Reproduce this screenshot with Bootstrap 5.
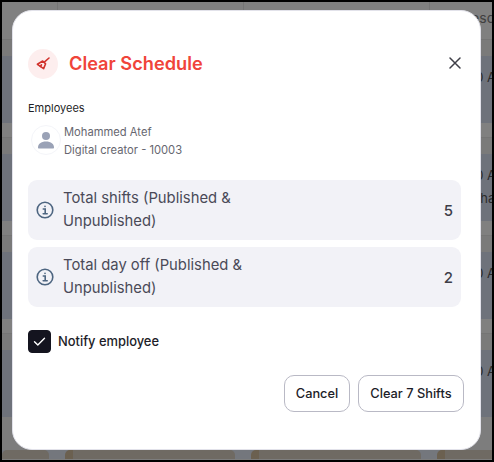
<!DOCTYPE html>
<html lang="en">
<head>
<meta charset="utf-8">
<title>Clear Schedule</title>
<link href="https://cdn.jsdelivr.net/npm/bootstrap@5.3.0/dist/css/bootstrap.min.css" rel="stylesheet">
<style>
html,body{height:100%;overflow:hidden}
body{font-family:Inter,"Liberation Sans",sans-serif;background:#000;padding:2px}
.sched{height:100%;overflow:hidden;background:#7d7d7d;font-size:13px;color:#2b2b2b;white-space:nowrap}
.sched-top{height:38px;background:#808080;border-bottom:1px solid #757575;padding:5px 0 0 431px;background-image:linear-gradient(#757575,#757575),linear-gradient(#757575,#757575),linear-gradient(#757575,#757575);background-size:1px 100%;background-repeat:no-repeat;background-position:55px 0,241px 0,427px 0;overflow:hidden;color:#3f3f3f;font-size:14px}
.sched-gap{height:16px;background:#7a7a7a}
.sched-band{height:67px;background:#6e727b;padding:11px 0 0 465px;overflow:hidden}
.sched-band p{margin:0;line-height:20px}
.sched-band .lo{margin-top:3px;padding-left:5px}
.sched-line{height:15px;background:#808080;border-bottom:1px solid #757575}
.sched-cards{height:9px;margin-top:33px;display:flex;background:#74777d}
.sched-cards i{display:block;width:16px;flex:none}
.sched-cards b{display:block;flex:none;height:100%;background:#6f6a63;border-left:8px solid #6b6050;border-radius:5px 5px 0 0}
.c0{width:47px;border-left:0!important}.c1{width:170px}.c2{width:170px}.c3{width:60px}
.modal.sheet{display:block;position:fixed;overflow:hidden}
.sheet .modal-dialog{width:469px;max-width:none;margin:10px 0 0 12px}
.sheet .modal-content{height:440px;border:1px solid #e2e2ea;border-radius:20px;background:#fff;padding:0 19px 0 15px}
.sheet .modal-header{border:0;padding:38px 0 0;height:68px}
.brand-dot{width:30px;height:30px;border-radius:50%;background:#fdeeee}
.sheet-title{font-size:18.2px;font-weight:600;color:#f0443a;margin:-2px 0 0 11px;line-height:30px}
.x-btn{background:none;border:0;padding:0;line-height:0;margin-top:-2px}
.sheet .modal-body{padding:0;flex:none}
.lbl{font-size:11px;color:#1f1f28;line-height:14px;margin-top:22px}
.person{margin:8px 0 0 3px;gap:3px;height:34px}
.ava{width:30px;height:30px;border-radius:50%;border:1px solid #f4f5f9;margin-top:2px}
.pname{font-size:11.2px;line-height:18px;color:#66666f}
.stat{background:#f2f2f7;border-radius:9px;height:60px;padding:0 8px;gap:9px;margin-bottom:7px;color:#4a4a58;font-size:14.8px;line-height:23px}
.stat-txt{width:190px}
.stats{margin-top:23px}
.stat-val{font-size:15px;font-weight:500;color:#3e3e48;margin-left:auto}
.notify{margin:23px 0 0;padding:0;min-height:0;display:flex;align-items:center;gap:7px}
.notify .form-check-input{width:23px;height:23px;margin:0;float:none;border-radius:4px;background-color:#14141f;border-color:#14141f}
.notify .form-check-input:checked[type=checkbox]{background-size:23px;background-image:url("data:image/svg+xml,%3csvg xmlns='http://www.w3.org/2000/svg' viewBox='0 0 23 23'%3e%3cpath fill='none' stroke='%23fff' stroke-width='1.4' stroke-linecap='round' stroke-linejoin='round' d='M6.500 11.800l3.300 3.300 6.700-6.800'/%3e%3c/svg%3e")}
.notify .form-check-label{font-size:12.9px;font-weight:500;color:#1d1d28;opacity:1}
.sheet .modal-footer{border:0;padding:0;margin:22px -3px 0 0;gap:8px;justify-content:flex-end}
.sheet .modal-footer .btn{margin:0;height:37px;border:1px solid #b9b9c5;border-radius:10px;background:#fff;color:#1d1d28;font-size:12.8px;font-weight:500;padding:0;line-height:35px}
.btn-cancel{width:66px}
.btn-clear{width:106px}
</style>
</head>
<body>
<div class="sched" aria-hidden="true">
  <div class="sched-top">Wednesday</div>
  <div class="sched-gap"></div>
  <div class="sched-band"><p>00 AM</p></div>
  <div class="sched-line"></div>
  <div class="sched-gap"></div>
  <div class="sched-band"><p>00 AM</p><p class="lo">Shad</p></div>
  <div class="sched-line"></div>
  <div class="sched-gap"></div>
  <div class="sched-band"><p>00 AM</p></div>
  <div class="sched-line"></div>
  <div class="sched-gap"></div>
  <div class="sched-band"><p>00 AM</p></div>
  <div class="sched-cards"><b class="c0"></b><i></i><b class="c1"></b><i></i><b class="c2"></b><i></i><b class="c3"></b></div>
</div>

<div class="modal sheet" role="dialog" aria-modal="true">
  <div class="modal-dialog">
    <div class="modal-content">
      <div class="modal-header d-flex align-items-center">
        <div class="brand-dot d-flex align-items-center justify-content-center">
          <svg width="18" height="18" viewBox="0 0 18 18" fill="none" stroke="#d1322c" stroke-width="1.6" stroke-linejoin="round" stroke-linecap="round"><path d="M15 3 10.300 7.200"/><path d="M8.700 6 11.600 8.800 9.600 13.600 3.400 9.300Z"/><path d="M6.400 11.500 7.500 9.800"/></svg>
        </div>
        <h5 class="sheet-title">Clear Schedule</h5>
        <button class="x-btn ms-auto" type="button" aria-label="Close">
          <svg width="12" height="12" viewBox="0 0 12 12" fill="none" stroke="#3f3f48" stroke-width="1.5" stroke-linecap="round"><path d="M1 1 11 11M11 1 1 11"/></svg>
        </button>
      </div>
      <div class="modal-body">
        <div class="lbl">Employees</div>
        <div class="person d-flex">
          <div class="ava d-flex align-items-center justify-content-center flex-shrink-0">
            <svg width="16" height="18" viewBox="0 0 16 18" fill="#9aa2b6"><circle cx="8" cy="5" r="4"/><path d="M1 17.500c-.6 0-1-.4-1-1C0 13 3 10.500 8 10.500s8 2.500 8 6c0 .6-.4 1-1 1Z"/></svg>
          </div>
          <div>
            <div class="pname">Mohammed Atef</div>
            <div class="pname">Digital creator - 10003</div>
          </div>
        </div>
        <div class="stats">
          <div class="stat d-flex align-items-center">
            <svg class="flex-shrink-0" width="18" height="18" viewBox="0 0 18 18" fill="none" stroke="#4d6580" stroke-width="1.600"><circle cx="9" cy="9" r="7.800"/><path d="M7.300 8h1.900v4.500M7.200 12.700h4" stroke-linecap="round"/><circle cx="9" cy="5.400" r=".8" fill="#4d6580" stroke="none"/></svg>
            <div class="stat-txt">Total shifts (Published &amp; Unpublished)</div>
            <div class="stat-val">5</div>
          </div>
          <div class="stat d-flex align-items-center">
            <svg class="flex-shrink-0" width="18" height="18" viewBox="0 0 18 18" fill="none" stroke="#4d6580" stroke-width="1.600"><circle cx="9" cy="9" r="7.800"/><path d="M7.300 8h1.900v4.500M7.200 12.700h4" stroke-linecap="round"/><circle cx="9" cy="5.400" r=".8" fill="#4d6580" stroke="none"/></svg>
            <div class="stat-txt">Total day off (Published &amp; Unpublished)</div>
            <div class="stat-val">2</div>
          </div>
        </div>
        <div class="form-check notify">
          <input class="form-check-input" type="checkbox" id="notify" checked>
          <label class="form-check-label" for="notify">Notify employee</label>
        </div>
      </div>
      <div class="modal-footer">
        <button class="btn btn-cancel" type="button">Cancel</button>
        <button class="btn btn-clear" type="button">Clear 7 Shifts</button>
      </div>
    </div>
  </div>
</div>
<script src="https://cdn.jsdelivr.net/npm/bootstrap@5.3.0/dist/js/bootstrap.bundle.min.js"></script>
</body>
</html>
